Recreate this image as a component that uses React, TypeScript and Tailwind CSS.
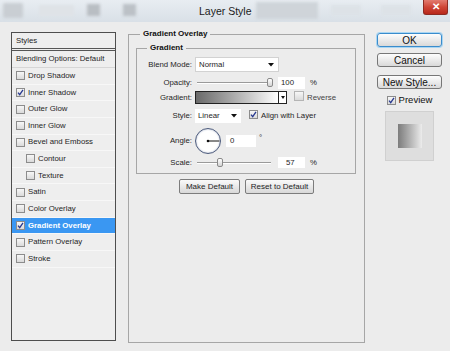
import React from 'react';

const font = { fontFamily: '"Liberation Sans", Arial, sans-serif' };

function Check({ checked = false, size = 9, dim = false }: { checked?: boolean; size?: number; dim?: boolean }) {
  return (
    <span
      className={`inline-flex shrink-0 items-center justify-center border bg-gradient-to-b from-[#f7f7f7] to-[#dadada] ${dim ? 'border-[#b4b4b4]' : 'border-[#8c8c8c]'}`}
      style={{ width: size, height: size }}
    >
      {checked && (
        <svg width={size - 2} height={size - 2} viewBox="0 0 7 7">
          <path d="M1 3.6 L2.7 5.6 L6 0.8" fill="none" stroke="#27388f" strokeWidth="1.3" />
        </svg>
      )}
    </span>
  );
}

function Arrow() {
  return (
    <svg width="6" height="4" viewBox="0 0 6 4" className="shrink-0">
      <polygon points="0,0 6,0 3,3.5" fill="#111" />
    </svg>
  );
}

function Slider({ pos }: { pos: number }) {
  return (
    <div className="relative h-[10px] w-[74px]">
      <div className="absolute left-0 right-0 top-[4px] h-[2px] border-t border-[#9a9a9a] bg-white" />
      <div
        className="absolute top-0 h-[9px] w-[6px] rounded-[2px] border border-[#8a8a8a] bg-gradient-to-b from-white to-[#d4d4d4]"
        style={{ left: pos }}
      />
    </div>
  );
}

const styles: { label: string; checked?: boolean; indent?: boolean; selected?: boolean }[] = [
  { label: 'Drop Shadow' },
  { label: 'Inner Shadow', checked: true },
  { label: 'Outer Glow' },
  { label: 'Inner Glow' },
  { label: 'Bevel and Emboss' },
  { label: 'Contour', indent: true },
  { label: 'Texture', indent: true },
  { label: 'Satin' },
  { label: 'Color Overlay' },
  { label: 'Gradient Overlay', checked: true, selected: true },
  { label: 'Pattern Overlay' },
  { label: 'Stroke' },
];

function RightButton({ children, primary = false, mt }: { children: React.ReactNode; primary?: boolean; mt: string }) {
  return (
    <div
      className={`${mt} flex h-[14px] w-[65px] items-center justify-center rounded-[3px] border bg-gradient-to-b from-[#fdfdfd] to-[#d9d9d9] text-[10px] text-[#111] ${
        primary ? 'border-[#3a8ccc] shadow-[0_0_0_1px_#a9d6f3]' : 'border-[#777]'
      }`}
    >
      {children}
    </div>
  );
}

export default function App() {
  return (
    <div className="flex h-[351px] w-[450px] flex-col overflow-hidden bg-[#ececec]" style={font}>
      {/* title bar */}
      <div className="flex h-[22px] shrink-0 items-start bg-gradient-to-b from-[#e8edf2] to-[#d9e0e7]">
        <div className="ml-[3px] mt-[3px] h-[15px] w-[20px] rounded-[2px] bg-[#c9ced3] blur-[1.5px]" />
        <div className="ml-[16px] mt-[5px] h-[11px] w-[35px] rounded-[2px] bg-[#dfe3e7] blur-[1px]" />
        <div className="ml-[13px] mt-[4px] h-[12px] w-[13px] bg-[#b9bec3] blur-[1.5px]" />
        <div className="ml-[23px] mt-[4px] h-[12px] w-[13px] bg-[#bcc1c6] blur-[1.5px]" />
        <div className="ml-[63px] mt-[4px] text-[10.5px] leading-[14px] text-[#1b1b1b]">Layer Style</div>
        <div className="ml-[4px] mt-[2px] h-[17px] w-[62px] bg-[#cfd4d9] blur-[1.5px]" />
        <div className="ml-[13px] mt-[5px] h-[10px] w-[30px] bg-[#dde2e7] blur-[1.5px]" />
        <div className="ml-[20px] mt-[5px] h-[10px] w-[30px] bg-[#dde2e7] blur-[1.5px]" />
        <div className="ml-auto mr-[2px] flex h-[15px] w-[25px] items-center justify-center rounded-b-[3px] border border-t-0 border-[#8d2b22] bg-gradient-to-b from-[#e27b6f] via-[#cf4536] to-[#b8281a] text-[10px] font-bold leading-none text-white">
          ✕
        </div>
      </div>

      {/* body */}
      <div className="flex items-start">
        {/* styles list */}
        <div className="ml-[11px] mt-[10px] flex h-[309px] w-[105px] flex-col border border-[#4e4e4e] bg-[#eeeeee] text-[7.8px] text-[#1e1e1e]">
          <div className="flex h-[18px] items-center border-b-[3px] border-double border-[#555] pl-[4px]">Styles</div>
          <div className="flex h-[17px] items-center border-b border-[#d6d6d6] pl-[4px]">Blending Options: Default</div>
          {styles.map((s) => (
            <div
              key={s.label}
              className={`flex h-[16.64px] items-center gap-[2px] border-b border-[#f7f7f7] ${s.indent ? 'pl-[14px]' : 'pl-[4px]'} ${
                s.selected ? 'bg-[#3a97f2] font-bold text-white' : ''
              }`}
            >
              <Check checked={s.checked} />
              <span className="ml-[1px]">{s.label}</span>
            </div>
          ))}
        </div>

        {/* settings */}
        <fieldset className="ml-[12px] mt-[7px] flex h-[314px] w-[237px] flex-col items-center border border-[#a6a6a6]">
          <legend className="ml-[11px] px-[3px] text-[8px] font-bold leading-[10px] text-[#111]">Gradient Overlay</legend>
          <fieldset className="ml-[7px] mt-[4px] h-[131px] w-[220px] self-start border border-[#a6a6a6]">
            <legend className="ml-[10px] px-[3px] text-[8px] font-bold leading-[10px] text-[#111]">Gradient</legend>
            <div className="flex flex-col text-[7.8px] text-[#1e1e1e]">
              <div className="mt-[4px] flex h-[15px] items-center gap-[3px]">
                <span className="w-[55px] text-right">Blend Mode:</span>
                <div className="flex h-[15px] w-[84px] items-center justify-between border border-[#d2d2d2] bg-white pl-[3px] pr-[4px]">
                  <span>Normal</span>
                  <Arrow />
                </div>
              </div>
              <div className="mt-[5px] flex h-[12px] items-center gap-[3px]">
                <span className="w-[55px] text-right">Opacity:</span>
                <div className="ml-[2px]"><Slider pos={70} /></div>
                <div className="ml-[4px] flex h-[12px] w-[27px] items-center bg-white pl-[3px]">100</div>
                <span className="ml-[2px]">%</span>
              </div>
              <div className="mt-[2px] flex h-[13px] items-center gap-[3px]">
                <span className="w-[55px] text-right">Gradient:</span>
                <div className="flex h-[13px] w-[92px] border border-[#222]">
                  <div className="h-full flex-1 bg-gradient-to-r from-[#6a6a6a] to-[#ffffff]" />
                  <div className="flex h-full w-[8px] items-center justify-center border-l border-[#222] bg-white">
                    <svg width="4" height="3" viewBox="0 0 4 3"><polygon points="0,0 4,0 2,3" fill="#111" /></svg>
                  </div>
                </div>
                <span className="ml-[4px]"><Check size={10} dim /></span>
                <span className="text-[#444]">Reverse</span>
              </div>
              <div className="mt-[5px] flex h-[14px] items-center gap-[3px]">
                <span className="w-[55px] text-right">Style:</span>
                <div className="flex h-[14px] w-[46px] items-center justify-between bg-white pl-[3px] pr-[4px]">
                  <span>Linear</span>
                  <Arrow />
                </div>
                <span className="ml-[5px]"><Check checked /></span>
                <span>Align with Layer</span>
              </div>
              <div className="mt-[5px] flex h-[26px] items-center gap-[3px]">
                <span className="w-[55px] text-right">Angle:</span>
                <div className="relative h-[26px] w-[26px] rounded-full border-[1.5px] border-[#4d5b7c] bg-white shadow-[inset_0_0_2px_#9aa6c0]">
                  <svg width="26" height="26" viewBox="0 0 26 26" className="absolute left-[-1.5px] top-[-1.5px]">
                    <circle cx="13" cy="13" r="1.3" fill="#111" />
                    <line x1="13" y1="13" x2="24.5" y2="13" stroke="#111" strokeWidth="1" />
                  </svg>
                </div>
                <div className="ml-[2px] flex h-[12px] w-[30px] items-center bg-white pl-[4px]">0</div>
                <span className="self-start pt-[4px] text-[8px]">°</span>
              </div>
              <div className="mt-[2px] flex h-[13px] items-center gap-[3px]">
                <span className="w-[55px] text-right">Scale:</span>
                <div className="ml-[2px]"><Slider pos={20} /></div>
                <div className="ml-[4px] flex h-[11px] w-[27px] items-center bg-white pl-[8px]">57</div>
                <span className="ml-[2px]">%</span>
              </div>
            </div>
          </fieldset>
          <div className="mt-[5px] flex gap-[5px] text-[8px] text-[#1e1e1e]">
            <div className="flex h-[15px] w-[61px] items-center justify-center rounded-[2px] border border-[#7c7c7c] bg-gradient-to-b from-[#fafafa] to-[#d8d8d8]">
              Make Default
            </div>
            <div className="flex h-[15px] w-[69px] items-center justify-center rounded-[2px] border border-[#7c7c7c] bg-gradient-to-b from-[#fafafa] to-[#d8d8d8]">
              Reset to Default
            </div>
          </div>
        </fieldset>

        {/* buttons */}
        <div className="ml-[12px] mt-[11px] flex w-[65px] flex-col items-center">
          <RightButton primary mt="mt-0">OK</RightButton>
          <RightButton mt="mt-[6px]">Cancel</RightButton>
          <RightButton mt="mt-[8px]">New Style...</RightButton>
          <div className="mt-[6px] flex h-[10px] items-center gap-[3px] text-[9.5px] text-[#111]">
            <Check checked />
            <span>Preview</span>
          </div>
          <div className="mt-[6px] flex h-[50px] w-[49px] items-center justify-center border border-[#d0d0d0] bg-[#dedede]">
            <div className="h-[24px] w-[24px] bg-gradient-to-r from-[#7c7c7c] to-[#ececec]" />
          </div>
        </div>
      </div>
    </div>
  );
}
